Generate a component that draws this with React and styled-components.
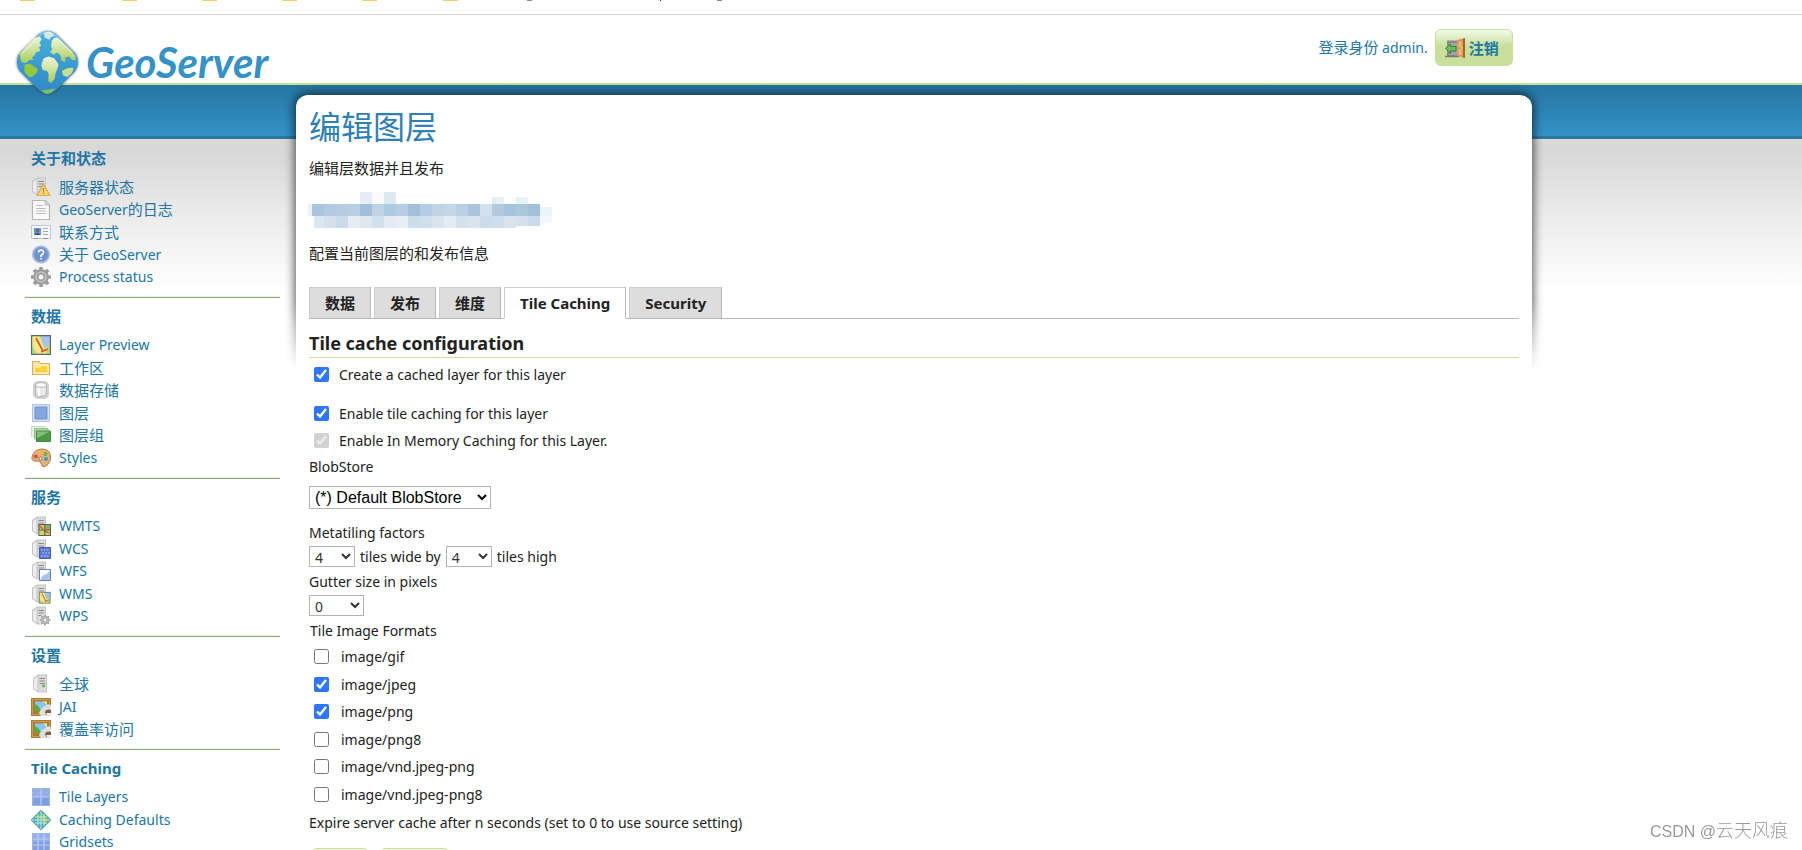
import React from "react";
import styled, { createGlobalStyle, css } from "styled-components";

const blue = "#2076a5";
const green = "#c8e09b";
const sans = `"Noto Sans", "Noto Sans CJK SC", sans-serif`;

const GlobalStyle = createGlobalStyle`
  * { box-sizing: border-box; }
  body {
    margin: 0;
    background: #fff;
    color: #222;
    font: 14px/22px ${sans};
  }
  h1, h2, h3, p, ul, fieldset { margin: 0; padding: 0; border: 0; }
  ul { list-style: none; }
  svg { display: block; flex: none; }
`;

/* ---------- page frame ---------- */

const Page = styled.div`
  height: 100vh;
  overflow: hidden;
`;

const BookmarkBar = styled.div`
  height: 15px;
  border-bottom: 1px solid #d9d9d9;
`;

const Header = styled.header`
  height: 70px;
  border-bottom: 2px solid ${green};
`;

const HeaderInner = styled.div`
  width: 85%;
  display: flex;
  justify-content: space-between;
  align-items: flex-start;
  padding: 10px 19px 0 10px;
`;

const Brand = styled.a`
  position: relative;
  z-index: 1;
  display: flex;
  height: 58px;
  color: #3492c8;
  text-decoration: none;
  font: italic 700 42px/74px Lato, sans-serif;
`;

const Login = styled.div`
  display: flex;
  align-items: center;
  gap: 7px;
  padding-top: 4px;
  color: ${blue};
`;

const GreenButton = styled.button`
  height: 37px;
  display: flex;
  align-items: center;
  gap: 4px;
  padding: 0 13px 0 9px;
  min-width: ${(p) => p.$min || 0}px;
  border: 1px solid ${green};
  border-radius: 6px;
  background: linear-gradient(#f4f9ea, ${green} 45%);
  color: ${blue};
  font: 700 15px/22px ${sans};
`;

const Backdrop = styled.div`
  background:
    linear-gradient(#2c77a2, #2c77a2) 0 51px / 100% 3px no-repeat,
    linear-gradient(#2676a1, #3492c8) 0 0 / 100% 52px no-repeat,
    linear-gradient(#d8d8d8 10%, #ebebeb 50%, #fff) 0 54px / 100% 150px no-repeat;
`;

const Columns = styled.div`
  width: 85%;
  display: flex;
  align-items: flex-start;
`;

/* ---------- side menu ---------- */

const Sidebar = styled.nav`
  flex: none;
  width: 296px;
  padding: 55px 16px 0 25px;
`;

const Section = styled.section`
  padding: 7px 6px 9px;
  border-bottom: 1px solid #94a384;
  box-shadow: inset 0 -1px 0 #eaf3dc;
`;

const SectionTitle = styled.h3`
  margin-bottom: 7px;
  color: ${blue};
  font: 700 15px/22px ${sans};
`;

const MenuItem = styled.li`
  height: 22px;
  &:nth-child(even) { height: 23px; }
`;

const MenuLink = styled.a`
  display: flex;
  align-items: center;
  gap: 8px;
  height: 100%;
  color: ${blue};
  text-decoration: none;
  white-space: pre;
`;

const Zh = styled.span`
  font-size: 15px;
`;

/* ---------- content card ---------- */

const Card = styled.main`
  position: relative;
  flex: 1;
  min-width: 0;
  margin-top: 10px;
  padding: 12px 13px 0;
  border-radius: 12px;
  background: #fff;
`;

const CardShadow = styled.div`
  position: absolute;
  z-index: -1;
  inset: -20px -20px auto;
  height: 300px;
  padding: 20px;
  overflow: hidden;
  mask-image: linear-gradient(#000 75%, transparent 98%);
  &::before {
    content: "";
    display: block;
    height: 400px;
    border-radius: 12px;
    box-shadow: 0 0 10px 2px rgba(0, 0, 0, 0.6);
  }
`;

const Layer = styled.div`
  position: relative;
  z-index: 0;
`;

const Title = styled.h1`
  color: #2f80b8;
  font: 400 32px/40px ${sans};
`;

const Note = styled.p`
  font-size: 15px;
  padding-top: ${(p) => p.$top}px;
`;

const LayerName = styled.div`
  margin: 13px 0 0 -1px;
`;

const Tabs = styled.div`
  display: flex;
  gap: 3px;
  margin-top: 23px;
  border-bottom: 1px solid #b8b8b8;
`;

const Tab = styled.button`
  height: 32px;
  margin-bottom: -1px;
  padding: 0 15px;
  border: 1px solid #b8b8b8;
  border-top-color: #ccc;
  border-left-color: #ccc;
  background: #ddd;
  color: #222;
  font: 700 15px/22px ${sans};
  ${(p) => p.$active && css`
    background: #fff;
    border-bottom-color: #fff;
  `}
`;

const Heading = styled.h2`
  margin-top: 12px;
  padding-bottom: 1px;
  border-bottom: 1px solid ${green};
  font: 700 18px/25px ${sans};
`;

const CheckRow = styled.label`
  display: flex;
  align-items: center;
  gap: ${(p) => p.$gap || 10}px;
  height: 27px;
  padding-left: 5px;
  margin-top: ${(p) => p.$top || 0}px;
`;

const Check = styled.input`
  width: 15px;
  height: 15px;
  margin: 0;
  accent-color: #2d76ff;
`;

const Label = styled.label`
  display: block;
  margin-top: ${(p) => p.$top || 0}px;
`;

const Formats = styled.fieldset`
  padding-top: 1px;
`;

const Legend = styled.legend`
  padding: 3px 0 0 1px;
`;

const Select = styled.select`
  width: ${(p) => p.$w}px;
  height: ${(p) => (p.$big ? 23 : 21)}px;
  padding: 0 1px;
  border: 1px solid #b3b3b3;
  border-radius: 0;
  background: #fff;
  color: ${(p) => (p.$big ? "#000" : "#333")};
  font: ${(p) => (p.$big ? `16px "Liberation Sans", sans-serif` : `14px ${sans}`)};
`;

const Inline = styled.div`
  display: flex;
  align-items: center;
  gap: 5px;
  height: 24px;
  padding-top: 1px;
`;

const BigRow = styled.div`
  display: flex;
  padding-top: 8px;
`;

const Buttons = styled.div`
  display: flex;
  gap: 11px;
  padding: 14px 2px;
`;

const Watermark = styled.div`
  position: fixed;
  right: 14px;
  bottom: 6px;
  color: #999;
  font: 16px/24px "Liberation Sans", sans-serif;
`;

const Author = styled.span`
  font: 300 18px/24px "Noto Sans CJK SC", sans-serif;
`;

/* ---------- drawings ---------- */

const Bookmarks = () => (
  <svg width="740" height="1">
    {[20, 122, 202, 282, 362, 443].map((x) => (
      <rect key={x} x={x} width="15" height="1" fill="#ecd06c" />
    ))}
    {[527, 717].map((x) => <rect key={x} x={x} width="5" height="1" fill="#888" />)}
    <rect x="660" width="1" height="1" fill="#333" />
  </svg>
);

const Globe = () => (
  <svg width="76" height="75" viewBox="0 0 228 225">
    <defs>
      <linearGradient id="sea" x1="0" y1="0" x2="0" y2="1">
        <stop offset="0" stopColor="#48b0de" />
        <stop offset="1" stopColor="#2f88c6" />
      </linearGradient>
      <linearGradient id="land" x1="0" y1="0" x2="0" y2="1">
        <stop offset="0" stopColor="#eef5dc" />
        <stop offset="1" stopColor="#a9ce58" />
      </linearGradient>
      <filter id="soft" x="-20%" y="-20%" width="140%" height="140%">
        <feGaussianBlur stdDeviation="5" />
      </filter>
    </defs>
    <g transform="translate(-7 -6) scale(1.05)">
      <path d="M90 32Q114 16 138 32L194 88Q207 113 194 136L137 196Q114 210 91 196L33 136Q20 113 33 88Z" fill="#333" opacity=".75" filter="url(#soft)" />
      <path d="M92 30Q114 14 136 30L193 87Q210 112 193 137L136 194Q114 209 92 194L34 137Q18 112 34 87Z" fill="url(#sea)" />
      <path d="M76 43L92 39L97 46L91 57L96 64L89 70L94 80L82 83L77 92L70 98L73 106L63 105L55 113L47 114L38 110L34 88Z" fill="url(#land)" />
      <path d="M48 119L64 116L74 123L87 132L82 143L71 153L61 156L48 139Z" fill="#94c83f" />
      <path d="M103 31Q114 19 128 29L134 37L124 41L119 48L106 42Z" fill="#cfe9df" />
      <path d="M124 66L126 51L133 42L143 42L181 78L194 94L194 107L184 105L176 96L165 98L164 112L154 107L150 91L140 84L132 91L121 83L127 76Z" fill="url(#land)" />
      <path d="M103 101L117 96L133 101L145 117L143 129L137 142L134 160L123 172L116 166L117 146L112 137L100 134L96 119Z" fill="url(#land)" />
      <path d="M155 137L168 130L181 127L189 131L182 145L170 154L158 149Z" fill="#c7df91" />
      <path d="M97 192L117 190L137 187L126 198Q114 206 104 200Z" fill="#78bd68" />
      <path d="M40 87L96 32Q114 20 132 32L186 87" fill="none" stroke="#fff" strokeWidth="5" opacity=".3" />
    </g>
  </svg>
);

const Tower = ({ x = 1 }) => (
  <g transform={`translate(${x} 0)`}>
    <path d="M0 4L5 .5H14V18.500H5L0 15Z" fill="#c4c4c4" />
    <path d="M1 5L4.500 2V17L1 14.500Z" fill="#ededed" />
    <path d="M5.500 1.500H13V17.500H5.500Z" fill="#dadada" />
    <path d="M6.500 4.500H12M6.500 7H12M6.500 9.500H12" stroke="#8c8c8c" />
  </g>
);

const Gear = ({ cx, cy, r, fill = "#aaa" }) => (
  <g transform={`translate(${cx} ${cy})`}>
    {[0, 45, 90, 135].map((a) => (
      <rect key={a} x={-r * 0.18} y={-r} width={r * 0.36} height={r * 2} rx=".5" fill={fill} transform={`rotate(${a})`} />
    ))}
    <circle r={r * 0.78} fill={fill} />
    <circle r={r * 0.5} fill="none" stroke="#c4c4c4" strokeWidth={r * 0.16} />
    <circle r={r * 0.25} fill="#f4f4f4" />
  </g>
);

const Picture = () => (
  <>
    <path d="M0 1H20V19H0Z" fill="#ad7b32" />
    <path d="M1.500 2.500H18.500V17.500H1.500Z" fill="none" stroke="#c99b4e" />
    <path d="M4 4.500H16V14H4Z" fill="#8ac5f5" />
    <path d="M4 7L7 9L11 14H4Z" fill="#46b43f" />
    <path d="M12 4.500H16V8Z" fill="#ffe27a" />
    <path d="M8 16L10 12L14 9L17 7L20 8V19H10Z" fill="#dedede" />
    <path d="M14 15Q15 11.500 20 13V18H15Z" fill="#80603a" />
    <path d="M15 16H20V18H16Z" fill="#f0f0f0" />
  </>
);

const MapTile = ({ x, y, s }) => (
  <g transform={`translate(${x} ${y}) scale(${s / 10})`}>
    <path d="M0 0H10V10H0Z" fill="#b9dc86" />
    <path d="M5 0H10V5L6 6Z" fill="#a5c2f0" />
    <path d="M0 0H4L8 10H4L0 5Z" fill="#f4ea8a" />
    <path d="M2.500 1.500L6 8L8.500 7M6 8L5 8.500" fill="none" stroke="#dc5a3c" strokeWidth=".9" />
    <path d="M.3 .3H9.700V9.700H.3Z" fill="none" stroke="#5a6c58" strokeWidth=".6" />
  </g>
);

const Tiles = ({ n }) => {
  const lines = Array.from({ length: n - 1 }, (_, i) => 1 + ((i + 1) * 18) / n);
  return (
    <>
      <path d="M1 1H19V19H1Z" fill="#7f9fe0" />
      <path d="M2 2H18V10H2Z" fill="#93afe8" />
      {lines.map((p) => (
        <path key={p} d={`M${p} 1V19M1 ${p}H19`} stroke="#bccdf4" strokeWidth="1.200" />
      ))}
      <path d="M1.500 1.500H18.500V18.500H1.500Z" fill="none" stroke="#9db4e6" />
    </>
  );
};

const art = {
  status: (
    <>
      <Tower />
      <path d="M12.500 7L19 18.500H6Z" fill="#fbd66c" stroke="#e0a850" strokeWidth="1.200" strokeLinejoin="round" />
      <path d="M12.500 11V14.500M12.500 15.800V17" stroke="#b5801c" strokeWidth="1.300" />
    </>
  ),
  logs: (
    <>
      <path d="M1.500 .5H14L18.500 5V19.500H1.500Z" fill="#fafafa" stroke="#b4b4b4" strokeWidth="1.200" />
      <path d="M14 1V5H18" fill="#ddd" stroke="#bbb" />
      <path d="M5 5.500H12M5 8.500H15M5 11H15M5 13.500H15" stroke="#bdbdbd" />
    </>
  ),
  contact: (
    <>
      <path d="M.5 3.500H19.500V16.500H.5Z" fill="#f7f8fa" stroke="#c3c8d0" />
      <path d="M3 6H10V13H3Z" fill="#5b9be6" />
      <circle cx="6.500" cy="8.500" r="1.800" fill="#96643c" />
      <path d="M3.500 13Q6.500 9 9.500 13Z" fill="#314c74" />
      <path d="M12 6.500H17M12 9.500H17M12 12.500H17" stroke="#a4aab2" />
      <path d="M3 16.500H7M12 16.500H17" stroke="#999" />
    </>
  ),
  about: (
    <>
      <circle cx="10" cy="9.500" r="8.500" fill="#7d9fd4" stroke="#b5c7e4" strokeWidth="1.500" />
      <circle cx="10" cy="9.500" r="6.500" fill="#6f93cc" />
      <path d="M7.500 7.500Q7.500 5 10 5T12.500 7.500Q12.500 9 10 10.500V12M10 13V14.500" fill="none" stroke="#fff" strokeWidth="1.600" />
    </>
  ),
  process: <Gear cx={10} cy={10} r={10} fill="#9c9c9c" />,
  preview: <MapTile x={0} y={0} s={20} />,
  folder: (
    <>
      <path d="M1.500 16.500V3.500H8L9.500 5.500H18.500V16.500Z" fill="#fbe7a0" stroke="#e2ae5c" strokeWidth="1.200" strokeLinejoin="round" />
      <path d="M3.500 15V9H9L11 7.500H17V15Z" fill="#f7d440" stroke="#fff3c0" />
    </>
  ),
  store: (
    <>
      <rect x="2" y="1" width="16" height="18" rx="5" fill="#d0d0d0" />
      <path d="M4.500 5V14.500Q10 18.500 15.500 14.500V5Z" fill="#e9e9e9" stroke="#b5b5b5" />
      <path d="M8 7V16" stroke="#fff" strokeWidth="2" />
      <ellipse cx="10" cy="5" rx="5.500" ry="2.300" fill="#fff" stroke="#b5b5b5" />
    </>
  ),
  layer: (
    <>
      <path d="M1.500 1.500H18.500V18.500H1.500Z" fill="#d5e0f6" stroke="#b0c2e6" />
      <path d="M4 4H16V16H4Z" fill="#86a6e0" stroke="#7594d0" />
    </>
  ),
  group: (
    <>
      <path d="M.5 1.500H14.500V11.500H.5Z" fill="#e5f3e2" stroke="#c5e0c0" />
      <path d="M3.500 3.500H17V14H3.500Z" fill="#b2d8ab" stroke="#8fbe88" />
      <path d="M5.500 6H19.500V16.500H5.500Z" fill="#4a9a43" stroke="#3f8a3a" />
      <path d="M6 6.500H19L6 13Z" fill="#82bf7a" />
    </>
  ),
  styles: (
    <>
      <path d="M1 9Q3 1 11 1T19.500 8Q20 15 15 18Q11 20 10.500 16.500Q10 13 7 13Q0 14 1 9Z" fill="#e2b27c" stroke="#b77b45" />
      <circle cx="4.800" cy="8.500" r="2" fill="#e74a3c" />
      <circle cx="9.500" cy="4.500" r="2" fill="#f5b92e" />
      <circle cx="14.500" cy="6" r="2" fill="#64b54b" />
      <circle cx="15" cy="11" r="2" fill="#3a9ad0" />
      <circle cx="9.500" cy="10.500" r="1.500" fill="#fff" stroke="#8a6a48" />
    </>
  ),
  wmts: (
    <>
      <Tower />
      <path d="M8 8.500H19.500V19.500H8Z" fill="#e9c84d" stroke="#565f6e" strokeWidth="1.200" />
      <path d="M8.500 14H13.500V19H8.500Z" fill="#c5dc60" />
      <path d="M14 9H19V13.500H14Z" fill="#86b75f" />
      <path d="M9 10L12 13M14 15L18 17" stroke="#d44c31" strokeWidth="1.200" />
      <path d="M13.800 8V20M8 14H20" stroke="#565f6e" strokeWidth="1.200" />
    </>
  ),
  wcs: (
    <>
      <Tower />
      <path d="M8.500 8.500H19.500V19.500H8.500Z" fill="#5b78cf" stroke="#4560b8" />
      <path d="M10 11H19M11.500 14H19M10 17H19" stroke="#a4b8f0" strokeWidth="1.500" strokeDasharray="1.500" />
    </>
  ),
  wfs: (
    <>
      <Tower />
      <path d="M8.500 8.500H19.500V19.500H8.500Z" fill="#fff" stroke="#6580c6" />
      <path d="M19 9.500V19H9.500Q11 14 14 13.500T19 9.500Z" fill="#a9c3f0" />
    </>
  ),
  wms: (
    <>
      <Tower />
      <MapTile x={8} y={8} s={11.5} />
    </>
  ),
  wps: (
    <>
      <Tower />
      <circle cx="14" cy="14" r="6" fill="#fff" opacity=".7" />
      <Gear cx={14} cy={14} r={5.5} fill="#aaa" />
    </>
  ),
  global: (
    <>
      <Tower x={2} />
      <circle cx="12.500" cy="12" r="1.400" fill="#4cb848" />
    </>
  ),
  picture: <Picture />,
  tiles: <Tiles n={2} />,
  defaults: (
    <>
      <path d="M10 1L19 10L10 19L1 10Z" fill="#4aa9b4" stroke="#4aa9b4" strokeWidth="2" strokeLinejoin="round" />
      <path d="M10 2L18 10L14 14L10 9Z" fill="#84c45c" />
      <path d="M2 10L10 2V10Z" fill="#49b893" />
      <path d="M7 4V16M13 4V16M4 7H16M4 13H16M10 1V19M1 10H19" stroke="#d8efe4" strokeWidth=".9" />
    </>
  ),
  grid: <Tiles n={3} />,
  door: (
    <>
      <path d="M2 2.500H13V18H2Z" fill="#8b8b8b" />
      <path d="M0 18.500H14" stroke="#777" strokeWidth="1.500" />
      <path d="M4 5H12V17H4Z" fill="#a2a2a2" />
      <path d="M.5 10.500L5.500 6V8.500H11V13H5.500V15.500Z" fill="#6dbb62" stroke="#36803b" strokeLinejoin="round" />
      <path d="M12 2L20 0V20L12 18Z" fill="#d99a5b" />
      <path d="M18 .5L20 0V20L18 19.500Z" fill="#a8642c" />
      <path d="M13.500 4L16.500 3.500V9L13.500 9.300ZM13.500 11L16.500 11V17L13.500 16.500Z" fill="#e8b981" />
      <circle cx="16.800" cy="10" r=".9" fill="#f7dc3c" />
    </>
  ),
};

const Icon = ({ name }) => (
  <svg width="20" height="20" viewBox="0 0 20 20" aria-hidden="true">{art[name]}</svg>
);

const nameCells = [
  "a9c6de b4cae0 b7cce1 b9cee2 a1c0d8 c0d3e5 aecbe2 b8cde3 a2c0d8 b5cde2 c0d4e6 c3d7e6 bbd0e4 abc6dc d4e1ec b3cade a5c3dc abc8da a1c1db",
  "dbe6f0 d4e1ed c9dbea e6edf5 dfe7f1 d2e0ed e4ebf4 e8eef5 cddde9 cfdfeb d9e4ee e3ebf3 d5e2ed d9e4ee cbdcea cddfec d8e3ec d4e1ec cbdae8",
].map((row) => row.split(" "));

const HiddenName = () => (
  <svg width="244" height="36" viewBox="0 0 244 36">
    <path d="M52 0H64V12H52Z" fill="#e6edf6" />
    <path d="M64 0H76V12H64Z" fill="#fafafa" />
    <path d="M76 0H88V12H76Z" fill="#deeaf3" />
    <path d="M184 5H196V12H184Z" fill="#e4eff6" />
    <path d="M208 5H220V12H208Z" fill="#e8f3f7" />
    <path d="M0 12H4V24H0Z" fill="#eef1f5" />
    <path d="M232 15H244V24H232Z" fill="#eaf4fd" />
    <path d="M232 24H244V31L232 32Z" fill="#f3f8fe" />
    {nameCells.map((row, y) =>
      row.map((c, x) => (
        <rect
          key={`${x}-${y}`}
          x={x === 0 && y === 1 ? 6 : 4 + x * 12}
          y={12 + y * 12}
          width={x === 0 && y === 1 ? 10 : 12}
          height={y === 1 && x > 16 ? 10 : 12}
          fill={`#${c}`}
        />
      ))
    )}
  </svg>
);

/* ---------- data ---------- */

const menu = [
  { title: "关于和状态", items: [
    ["status", <Zh>服务器状态</Zh>],
    ["logs", <span>GeoServer<Zh>的日志</Zh></span>],
    ["contact", <Zh>联系方式</Zh>],
    ["about", <span><Zh>关于</Zh> GeoServer</span>],
    ["process", "Process status"],
  ] },
  { title: "数据", items: [
    ["preview", "Layer Preview"],
    ["folder", <Zh>工作区</Zh>],
    ["store", <Zh>数据存储</Zh>],
    ["layer", <Zh>图层</Zh>],
    ["group", <Zh>图层组</Zh>],
    ["styles", "Styles"],
  ] },
  { title: "服务", items: [
    ["wmts", "WMTS"],
    ["wcs", "WCS"],
    ["wfs", "WFS"],
    ["wms", "WMS"],
    ["wps", "WPS"],
  ] },
  { title: "设置", items: [
    ["global", <Zh>全球</Zh>],
    ["picture", "JAI"],
    ["picture", <Zh>覆盖率访问</Zh>],
  ] },
  { title: "Tile Caching", items: [
    ["tiles", "Tile Layers"],
    ["defaults", "Caching Defaults"],
    ["grid", "Gridsets"],
  ] },
];

const tabs = ["数据", "发布", "维度", "Tile Caching", "Security"];
const activeTab = "Tile Caching";

const formats = [
  ["image/gif", false],
  ["image/jpeg", true],
  ["image/png", true],
  ["image/png8", false],
  ["image/vnd.jpeg-png", false],
  ["image/vnd.jpeg-png8", false],
];

const SideMenu = () => (
  <Sidebar>
    {menu.map((s) => (
      <Section key={s.title}>
        <SectionTitle>{s.title}</SectionTitle>
        <ul>
          {s.items.map(([icon, label], i) => (
            <MenuItem key={i}>
              <MenuLink href="#"><Icon name={icon} />{label}</MenuLink>
            </MenuItem>
          ))}
        </ul>
      </Section>
    ))}
  </Sidebar>
);

const TileCaching = () => (
  <form>
    <Heading>Tile cache configuration</Heading>
    <CheckRow $top={3}><Check type="checkbox" defaultChecked />Create a cached layer for this layer</CheckRow>
    <CheckRow $top={12}><Check type="checkbox" defaultChecked />Enable tile caching for this layer</CheckRow>
    <CheckRow><Check type="checkbox" defaultChecked disabled />Enable In Memory Caching for this Layer.</CheckRow>
    <Label htmlFor="blob" $top={2}>BlobStore</Label>
    <BigRow>
      <Select id="blob" $w={182} $big><option>(*) Default BlobStore</option></Select>
    </BigRow>
    <Label htmlFor="wide" $top={13}>Metatiling factors</Label>
    <Inline>
      <Select id="wide" $w={46}><option>4</option></Select>
      <label htmlFor="wide">tiles wide by</label>
      <Select id="high" $w={46}><option>4</option></Select>
      <label htmlFor="high">tiles high</label>
    </Inline>
    <Label htmlFor="gutter" $top={3}>Gutter size in pixels</Label>
    <Inline>
      <Select id="gutter" $w={55}><option>0</option></Select>
    </Inline>
    <Formats>
      <Legend>Tile Image Formats</Legend>
      {formats.map(([name, on], i) => (
        <CheckRow key={name} $gap={12} $top={i % 2}>
          <Check type="checkbox" defaultChecked={on} />{name}
        </CheckRow>
      ))}
    </Formats>
    <Label as="p" $top={4}>Expire server cache after n seconds (set to 0 to use source setting)</Label>
    <Buttons>
      <GreenButton type="button" aria-label="保存" $min={58} />
      <GreenButton type="button" aria-label="应用" $min={70} />
    </Buttons>
  </form>
);

export default function App() {
  return (
    <Page>
      <GlobalStyle />
      <BookmarkBar><Bookmarks /></BookmarkBar>
      <Header>
        <HeaderInner>
          <Brand href="#"><Globe />GeoServer</Brand>
          <Login>
            <span><Zh>登录身份</Zh> admin.</span>
            <GreenButton type="button"><Icon name="door" />注销</GreenButton>
          </Login>
        </HeaderInner>
      </Header>
      <Layer>
        <Backdrop>
          <Columns>
            <SideMenu />
            <Layer as={Card}>
              <CardShadow />
              <Title>编辑图层</Title>
              <Note $top={10}>编辑层数据并且发布</Note>
              <LayerName><HiddenName /></LayerName>
              <Note $top={14}>配置当前图层的和发布信息</Note>
              <Tabs role="tablist">
                {tabs.map((t) => (
                  <Tab key={t} type="button" role="tab" aria-selected={t === activeTab} $active={t === activeTab}>
                    {t}
                  </Tab>
                ))}
              </Tabs>
              <TileCaching />
            </Layer>
          </Columns>
        </Backdrop>
      </Layer>
      <Watermark>CSDN @<Author>云天风痕</Author></Watermark>
    </Page>
  );
}
